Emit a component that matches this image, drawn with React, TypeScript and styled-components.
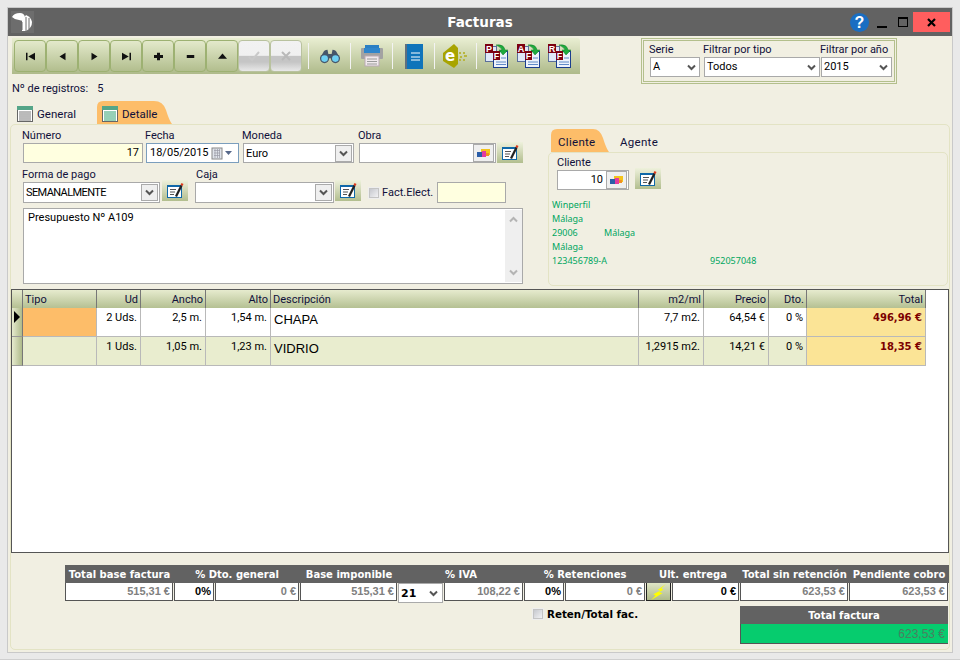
import React from 'react'
import styled, { createGlobalStyle } from 'styled-components'

const GlobalStyle = createGlobalStyle`
    html, body {
        margin: 0;
        padding: 0;
        background-color: #e9e9e9;
    }
    * {
        box-sizing: border-box;
    }
`

const UI = `Roboto, "Liberation Sans", sans-serif`
const ARIAL = `"Liberation Sans", Arial, sans-serif`
const WIDE = `"DejaVu Sans", Verdana, sans-serif`

const Page = styled.div`
    width: 960px;
    height: 660px;
    padding: 8px 8px 8px 8px;
    border-bottom: 1px solid #cfcfcf;
    font-family: ${UI};
    font-size: 11px;
    color: #10103a;
`

const Window = styled.div`
    height: 644px;
    background-color: #f1efe2;
    outline: 1px solid #c9c9c9;
    display: flex;
    flex-direction: column;
`

const TitleBar = styled.div`
    height: 28px;
    flex: none;
    background-color: #626262;
    display: grid;
    grid-template-columns: 1fr auto 1fr;
    align-items: center;
`

const Title = styled.div`
    font-family: ${WIDE};
    font-weight: 700;
    font-size: 13.5px;
    color: #fff;
`

const LogoBox = styled.div`
    width: 23px;
    height: 22px;
    margin-left: 3px;
    background-color: #6d6d6d;
`

const Controls = styled.div`
    display: flex;
    align-items: center;
    justify-content: flex-end;
    padding-right: 2px;
`

const Help = styled.div`
    width: 19px;
    height: 19px;
    margin-right: 8px;
    border-radius: 50%;
    background-color: #1a6ec2;
    color: #fff;
    font-family: ${ARIAL};
    font-weight: 700;
    font-size: 16px;
    line-height: 19px;
    text-align: center;
`

const MinButton = styled.div`
    width: 10px;
    height: 2px;
    margin: 9px 11px 0 0;
    background-color: #000;
`

const MaxButton = styled.div`
    width: 10px;
    height: 10px;
    margin-right: 5px;
    border: 1px solid #000;
    border-top-width: 2px;
`

const CloseButton = styled.div`
    width: 37px;
    height: 20px;
    background-color: #ff5e5e;
    display: flex;
    align-items: center;
    justify-content: center;
`

const TopBar = styled.div`
    height: 65px;
    flex: none;
    padding: 2px 0 0 4px;
    display: flex;
`

const LeftTop = styled.div`
    width: 568px;
`

const Toolbar = styled.div`
    height: 36px;
    padding-left: 2px;
    display: flex;
    align-items: center;
    border-radius: 0 3px 0 0;
    background: linear-gradient(#e9eed2, #aeba8a);
`

const NavButton = styled.div`
    width: 32px;
    height: 32px;
    border: 1px solid #9db172;
    border-radius: 4px;
    background: linear-gradient(#e3e9cb, #b2be8e);
    display: flex;
    align-items: center;
    justify-content: center;
`

const OffButton = styled.div`
    width: 32px;
    height: 32px;
    border-radius: 4px;
    border: 1px solid #b9c29f;
    background: linear-gradient(#f2f2f2 0, #f0f0f0 48%, #c5c5c5 50%, #c5c5c5 70%, #e8e8e8 100%);
    display: flex;
    align-items: center;
    justify-content: center;
`

const ToolSep = styled.div<{ $first?: boolean }>`
    width: 1px;
    height: 26px;
    background-color: #f3f3f3;
    margin-left: ${p => (p.$first ? '6px' : '0')};
`

const ToolIcon = styled.div<{ $w: number }>`
    width: ${p => p.$w}px;
    height: 32px;
    flex: none;
    display: flex;
    align-items: center;
    justify-content: center;
`

const Registers = styled.div`
    margin-top: 8px;
    display: flex;
    line-height: 14px;
    gap: 9px;
    color: #10103a;
`

const FilterBox = styled.div`
    width: 256px;
    height: 46px;
    margin-left: 61px;
    padding: 2px 4px 0 5px;
    border: 3px double #b3bf8c;
    display: flex;
`

const FilterField = styled.div<{ $w: number }>`
    width: ${p => p.$w}px;
    line-height: 14px;
    display: flex;
    flex-direction: column;
    flex: none;
    white-space: nowrap;
`

const SelectBox = styled.div<{ $w?: number; $h?: number; $ml?: number }>`
    width: ${p => (p.$w ? `${p.$w}px` : '100%')};
    height: ${p => p.$h ?? 21}px;
    margin-left: ${p => p.$ml ?? 0}px;
    padding-left: 2px;
    background-color: #fff;
    border: 1px solid #a9a9a9;
    display: flex;
    align-items: center;
    justify-content: space-between;
    font-size: 11px;
    color: #000;
`

const CapsValue = styled.span`
    letter-spacing: -0.6px;
`

const PlainArrow = styled.span`
    width: 14px;
    display: flex;
    justify-content: center;
    padding-right: 2px;
`

const BoxArrow = styled.span`
    width: 17px;
    height: 17px;
    margin-right: 1px;
    background-color: #efefef;
    border: 1px solid #aaa;
    display: flex;
    align-items: center;
    justify-content: center;
`

const TabStrip = styled.div`
    height: 23px;
    flex: none;
    padding-left: 6px;
    display: flex;
`

const TabButton = styled.div<{ $w: number; $active?: boolean }>`
    width: ${p => p.$w}px;
    height: 23px;
    margin-right: 2px;
    padding: 2px 0 0 ${p => (p.$active ? 5 : 3)}px;
    display: flex;
    align-items: center;
    gap: 4px;
    font-size: 11.5px;
    color: #10103a;
    background-color: ${p => (p.$active ? '#fdbd69' : 'transparent')};
    clip-path: path('M0 23 V6 Q0 0 6 0 H${p => p.$w - 18} Q${p => p.$w - 9} 0 ${p => p.$w - 6} 9 Q${p => p.$w - 3} 19 ${p => p.$w} 23 Z');
`

const MainPanel = styled.div`
    height: 526px;
    margin: 0 2px;
    border: 1px solid #e3e3c4;
    border-radius: 5px;
    display: flex;
    flex-direction: column;
`

const FormArea = styled.div`
    height: 164px;
    flex: none;
    display: flex;
`

const LeftForm = styled.div`
    width: 537px;
    flex: none;
    padding: 4px 0 0 11px;
    display: flex;
    flex-direction: column;
    gap: 5px;
`

const FormRow = styled.div`
    display: flex;
    align-items: flex-end;
`

const Field = styled.div<{ $gap?: number }>`
    margin-right: ${p => p.$gap ?? 0}px;
    display: flex;
    flex-direction: column;
`

const Label = styled.div<{ $ml?: number }>`
    height: 14px;
    margin-left: ${p => p.$ml ?? 0}px;
    line-height: 13px;
    white-space: nowrap;
`

const InputBox = styled.div<{ $w: number; $h?: number; $ml?: number; $yellow?: boolean; $focus?: boolean }>`
    width: ${p => p.$w}px;
    height: ${p => p.$h ?? 20}px;
    margin-left: ${p => p.$ml ?? 1}px;
    padding: 0 3px;
    background-color: ${p => (p.$yellow ? '#ffffe0' : '#fff')};
    border: 1px solid ${p => (p.$focus ? '#7b9ebd' : '#a9a9a9')};
    display: flex;
    align-items: center;
    justify-content: space-between;
    color: #000;
    line-height: 14px;
`

const RightValue = styled.span<{ $mr?: number }>`
    margin-left: auto;
    margin-right: ${p => p.$mr ?? 0}px;
`

const PickButton = styled.span`
    width: 21px;
    height: 18px;
    margin-right: -2px;
    background-color: #efefef;
    border: 1px solid #aaa;
    display: flex;
    align-items: center;
    justify-content: center;
`

const EditButton = styled.div<{ $left?: number; $bottom?: number }>`
    width: 26px;
    height: 21px;
    margin-left: ${p => p.$left ?? 0}px;
    margin-bottom: ${p => p.$bottom ?? 0}px;
    background: linear-gradient(#eef1dc, #b2be8e);
    display: flex;
    align-items: center;
    justify-content: center;
`

const CheckBox = styled.span`
    width: 10px;
    height: 10px;
    flex: none;
    border: 1px solid #c4c4c4;
    background: linear-gradient(135deg, #c6c8ce, #f2f2f4);
    outline: 1px solid #eee;
`

const CheckLabel = styled.div`
    width: 67px;
    margin-left: 8px;
    height: 21px;
    display: flex;
    align-items: center;
    gap: 3px;
    white-space: nowrap;
`

const Notes = styled.div`
    width: 500px;
    height: 76px;
    margin-left: 1px;
    padding: 2px 0 0 4px;
    background-color: #fff;
    border: 1px solid #a9a9a9;
    display: flex;
    justify-content: space-between;
    color: #000;
`

const ScrollTrack = styled.div`
    width: 17px;
    margin: -1px 0 1px;
    background-color: #efefef;
    display: flex;
    flex-direction: column;
    align-items: center;
    justify-content: space-between;
    padding: 6px 0;
`

const RightForm = styled.div`
    width: 401px;
    padding-top: 4px;
    display: flex;
    flex-direction: column;
`

const SubTabs = styled.div`
    height: 23px;
    flex: none;
    padding-left: 3px;
    display: flex;
`

const SubTab = styled.div<{ $w: number; $active?: boolean }>`
    width: ${p => p.$w}px;
    height: 23px;
    padding: 3px 0 0 ${p => (p.$active ? 7 : 11)}px;
    line-height: 20px;
    font-size: 11.5px;
    letter-spacing: 0.3px;
    color: #10103a;
    background-color: ${p => (p.$active ? '#fdbd69' : 'transparent')};
    clip-path: path('M0 23 V6 Q0 0 6 0 H${p => p.$w - 16} Q${p => p.$w - 9} 0 ${p => p.$w - 6} 9 Q${p => p.$w - 3} 19 ${p => p.$w} 23 Z');
`

const SubPanel = styled.div`
    width: 400px;
    height: 134px;
    padding: 3px 0 0 3px;
    border: 1px solid #e3e3c4;
    border-radius: 5px;
`

const ClientRow = styled.div`
    padding-left: 5px;
    display: flex;
    align-items: flex-end;
`

const ClientInfo = styled.div`
    margin-top: 8px;
    display: grid;
    grid-template-columns: 52px 106px 1fr;
    grid-auto-rows: 14px;
    font-family: "Noto Sans", ${ARIAL};
    font-size: 9px;
    line-height: 14px;
    color: #00a65f;
    white-space: nowrap;
`

const DataGrid = styled.div`
    height: 264px;
    flex: none;
    border: 1px solid #555;
    background-color: #fff;
`

const GridRow = styled.div<{ $h: number }>`
    height: ${p => p.$h}px;
    display: grid;
    grid-template-columns: 11px 74px 44px 65px 65px 368px 65px 65px 38px 119px;
`

const HeadCell = styled.div<{ $right?: boolean }>`
    padding: 0 2px;
    line-height: 19px;
    text-align: ${p => (p.$right ? 'right' : 'left')};
    background: linear-gradient(#e6ebce, #b2be8f);
    border-right: 1px solid #777;
    border-bottom: 1px solid #666;
    color: #10103a;
    white-space: nowrap;
`

const Cell = styled.div<{ $bg?: string; $right?: boolean }>`
    padding: 0 3px;
    line-height: 19px;
    text-align: ${p => (p.$right ? 'right' : 'left')};
    background-color: ${p => p.$bg ?? 'transparent'};
    border-right: 1px solid #b9b9b9;
    border-bottom: 1px solid #b9b9b9;
    color: #000;
    white-space: nowrap;
`

const DescCell = styled(Cell)`
    font-family: ${ARIAL};
    font-size: 13px;
    line-height: 23px;
`

const AmountCell = styled(Cell)`
    font-family: ${WIDE};
    font-weight: 700;
    font-size: 10px;
    color: #7c0000;
`

const RowMark = styled.div`
    background: linear-gradient(90deg, #e6ebce, #aeba8a);
    border-right: 1px solid #777;
    border-bottom: 1px solid #999;
    padding: 3px 0 0 2px;
`

const Totals = styled.div`
    margin-top: 12px;
    padding-left: 54px;
    display: flex;
`

const TotalGroup = styled.div<{ $w: number }>`
    width: ${p => p.$w}px;
    flex: none;
    display: flex;
    flex-direction: column;
`

const TotalHead = styled.div`
    height: 18px;
    background-color: #626262;
    color: #fff;
    font-family: ${WIDE};
    font-weight: 700;
    font-size: 10px;
    line-height: 19px;
    text-align: center;
    white-space: nowrap;
    overflow: hidden;
`

const TotalValues = styled.div`
    height: 18px;
    padding-right: 1px;
    display: flex;
    gap: 1px;
`

const TotalValue = styled.div<{ $w?: number; $dark?: boolean }>`
    flex: ${p => (p.$w ? `0 0 ${p.$w}px` : '1')};
    padding-right: 2px;
    background-color: #fff;
    border: 1px solid #555;
    border-top: 0;
    text-align: right;
    font-family: ${ARIAL};
    font-weight: 700;
    font-size: 11px;
    line-height: 17px;
    color: ${p => (p.$dark ? '#000' : '#808080')};
`

const IvaSelect = styled.div`
    flex: 0 0 45px;
    height: 20px;
    padding: 0 4px 0 2px;
    background-color: #fff;
    border: 1px solid #aaa;
    display: flex;
    align-items: center;
    justify-content: space-between;
    font-family: ${WIDE};
    font-weight: 700;
    font-size: 11px;
    color: #000;
`

const BoltButton = styled.div`
    flex: 0 0 25px;
    background: linear-gradient(#dfe5c6, #aeba8a);
    border: 1px solid #222;
    border-top: 0;
    display: flex;
    align-items: center;
    justify-content: center;
`

const BottomRow = styled.div`
    margin-top: 5px;
    padding-left: 522px;
    display: flex;
`

const RetenLabel = styled.div`
    width: 208px;
    height: 15px;
    display: flex;
    align-items: center;
    gap: 4px;
    font-family: ${WIDE};
    font-weight: 700;
    font-size: 10.3px;
    color: #000;
    white-space: nowrap;
`

const GrandTotal = styled.div`
    width: 208px;
    margin-left: -1px;
    display: flex;
    flex-direction: column;
`

const GrandValue = styled.div`
    height: 20px;
    padding-right: 3px;
    background-color: #06cc6e;
    border-bottom: 1px solid #555;
    border-left: 1px solid #555;
    text-align: right;
    font-family: ${ARIAL};
    font-size: 12px;
    line-height: 20px;
    color: #4a7f60;
`

const Logo = () => (
    <svg width="23" height="22" viewBox="0 0 23 22">
        <path d="M1 6 Q3 2 9 2 Q13 2 14 6 L14 12 Q11 9 8 9 Q4 9 1 6Z" fill="#fff" />
        <path d="M11 10 L15 4 Q20 6 21 11 Q21 17 15 20 L11 20Z" fill="#fff" />
        <path d="M11 11V19M15 6V20M18 7V18" stroke="#6d6d6d" strokeWidth="1" />
    </svg>
)

const CloseIcon = () => (
    <svg width="9" height="9" viewBox="0 0 9 9">
        <path d="M1 1 8 8M8 1 1 8" stroke="#000" strokeWidth="2.2" />
    </svg>
)

const Nav = ({ d }: { d: string }) => (
    <svg width="11" height="9" viewBox="0 0 14 12">
        <path d={d} fill="#111" />
    </svg>
)

const Binoculars = () => (
    <svg width="24" height="15" viewBox="0 0 26 18">
        <path d="M5 4 Q6 1 10 1 L11 6 H15 L16 1 Q20 1 21 4 L25 11 H1Z" fill="#46566a" />
        <circle cx="6.5" cy="11.5" r="5.5" fill="#46566a" />
        <circle cx="19.5" cy="11.5" r="5.5" fill="#46566a" />
        <circle cx="6.5" cy="11.5" r="4" fill="#6fd0f2" />
        <circle cx="19.5" cy="11.5" r="4" fill="#6fd0f2" />
    </svg>
)

const Printer = () => (
    <svg width="22" height="22" viewBox="0 0 22 22">
        <rect x="4" y="0" width="14" height="5" fill="#2a7fc4" />
        <rect x="0" y="3" width="22" height="11" rx="1" fill="#a2a2a2" />
        <rect x="3" y="3" width="16" height="5" fill="#2f86cc" />
        <rect x="4" y="11" width="14" height="10" fill="#f0e9ec" stroke="#b9a9b4" />
        <path d="M6 14H16M6 16.5H16M6 19H16" stroke="#9a9a9a" />
    </svg>
)

const Book = () => (
    <svg width="18" height="25" viewBox="0 0 18 25">
        <rect x="0" y="0" width="18" height="25" fill="#0f74ba" />
        <rect x="0" y="0" width="2" height="25" fill="#5f6f7e" />
        <path d="M6 9H15M6 13H15M6 16H15" stroke="#fff" strokeWidth="1" />
    </svg>
)

const EIcon = () => (
    <svg width="25" height="25" viewBox="0 0 25 25">
        <path d="M11 0 L0 9 V17 L11 24 L15 20 V4Z" fill="#a8a400" />
        <text x="7" y="17" fontFamily={WIDE} fontSize="15" fontWeight="700" fill="#fff" textAnchor="middle">
            e
        </text>
        <path d="M16 8h2v2h-2zM20 8h2v2h-2zM17 12h2v2h-2zM21 11h3v2h-3zM16 15h2v2h-2zM20 15h2v2h-2z" fill="#b8b640" />
    </svg>
)

const DocCopy = ({ letter }: { letter: string }) => (
    <svg width="24" height="24" viewBox="0 0 24 24">
        <rect x="0.5" y="2.5" width="11" height="15" fill="#dfe8f8" stroke="#5b6f9a" />
        <rect x="0" y="0" width="8" height="9" fill="#7c0010" />
        <text x="4" y="8" fontFamily={ARIAL} fontSize="9" fontWeight="700" fill="#fff" textAnchor="middle">
            {letter}
        </text>
        <rect x="8.5" y="7.5" width="14" height="16" fill="#eef3fb" stroke="#1c3f8f" />
        <rect x="8" y="7" width="7" height="9" fill="#7c0010" />
        <text x="11.5" y="15" fontFamily={ARIAL} fontSize="9" fontWeight="700" fill="#fff" textAnchor="middle">
            F
        </text>
        <path d="M16 14H21M11 18H21M11 20.5H21" stroke="#5f8ac8" />
        <path d="M11 1 Q19 0 20 6 L23 6 L18 11 L14 6 L17 6 Q16 3 11 1Z" fill="#1eaa3c" stroke="#0d7a28" strokeWidth="0.5" />
    </svg>
)

const GridIcon = ({ active }: { active?: boolean }) => (
    <svg width="16" height="16" viewBox="0 0 16 16">
        <rect x="0.5" y="0.5" width="15" height="15" fill="#fff" stroke="#666" />
        <rect x="0" y="0" width="16" height="4" fill="#55a588" />
        <path d="M2 6H14M2 8H14M2 10H14M2 12H14M2 14H14" stroke={active ? '#2aa06e' : '#777'} />
    </svg>
)

const Chevron = () => (
    <svg width="9" height="7" viewBox="0 0 9 7">
        <path d="M1 1.5 4.5 5 8 1.5" fill="none" stroke="#555" strokeWidth="2" />
    </svg>
)

const ScrollArrow = ({ up }: { up?: boolean }) => (
    <svg width="9" height="7" viewBox="0 0 9 7">
        <path d={up ? 'M1 5.5 4.5 2 8 5.5' : 'M1 1.5 4.5 5 8 1.5'} fill="none" stroke="#b4b4b4" strokeWidth="2" />
    </svg>
)

const CalendarIcon = () => (
    <svg width="24" height="13" viewBox="0 0 24 13">
        <rect x="1" y="1" width="10" height="11" fill="#dfe3ea" stroke="#888" />
        <path d="M3 3.5H9M3 6H9M3 8.5H9M4 2V11M6.5 2V11M8.5 2V11" stroke="#9a9aa5" strokeWidth="0.7" />
        <path d="M14 4H21L17.5 8Z" fill="#56688a" />
    </svg>
)

const FolderIcon = () => (
    <svg width="13" height="10" viewBox="0 0 13 10">
        <rect x="4" y="1" width="9" height="6" fill="#f3c31c" />
        <rect x="0" y="4" width="7" height="5" fill="#2a5da8" />
        <rect x="5" y="3" width="4" height="6" fill="#e23aa0" />
        <rect x="9" y="5" width="3" height="3" fill="#f09020" />
    </svg>
)

const EditIcon = () => (
    <svg width="17" height="15" viewBox="0 0 17 15">
        <rect x="0.5" y="2.5" width="14" height="12" fill="#fff" stroke="#0f68a8" />
        <rect x="0" y="2" width="15" height="2" fill="#0f68a8" />
        <path d="M3 6.5H9M3 9H8M3 11.5H7" stroke="#555" />
        <path d="M8 13 13.5 2 15.5 3 10 14Z" fill="#222" />
        <path d="M13.5 2 14.5 0 16.5 1 15.5 3Z" fill="#e03a1a" />
    </svg>
)

const Bolt = () => (
    <svg width="16" height="16" viewBox="0 0 14 14">
        <path d="M13 0 6 5 8 6 2 9 4 10 0 14 10 8 7 7 11 5 9 4Z" fill="#ffff00" />
    </svg>
)

const columns = ['Ud', 'Ancho', 'Alto']

const rows = [
    { ud: '2 Uds.', ancho: '2,5 m.', alto: '1,54 m.', desc: 'CHAPA', m2: '7,7 m2.', precio: '64,54 €', dto: '0 %', total: '496,96 €', bg: '#ffffff', tipo: '#fdbd69', mark: true },
    { ud: '1 Uds.', ancho: '1,05 m.', alto: '1,23 m.', desc: 'VIDRIO', m2: '1,2915 m2.', precio: '14,21 €', dto: '0 %', total: '18,35 €', bg: '#e9edcf', tipo: '#e9edcf', mark: false },
]

const App = () => {
    return (
        <Page>
            <GlobalStyle />
            <Window>
                <TitleBar>
                    <LogoBox>
                        <Logo />
                    </LogoBox>
                    <Title>Facturas</Title>
                    <Controls>
                        <Help>?</Help>
                        <MinButton />
                        <MaxButton />
                        <CloseButton>
                            <CloseIcon />
                        </CloseButton>
                    </Controls>
                </TitleBar>
                <TopBar>
                    <LeftTop>
                        <Toolbar>
                            <NavButton><Nav d="M1 1h2v10H1zM13 1v10L4 6z" /></NavButton>
                            <NavButton><Nav d="M11 1v10L3 6z" /></NavButton>
                            <NavButton><Nav d="M3 1v10l8-5z" /></NavButton>
                            <NavButton><Nav d="M1 1v10l9-5zM11 1h2v10h-2z" /></NavButton>
                            <NavButton><Nav d="M5 1h4v3h4v4H9v3H5V8H1V4h4z" /></NavButton>
                            <NavButton><Nav d="M2 4h10v4H2z" /></NavButton>
                            <NavButton><Nav d="M7 2l6 7H1z" /></NavButton>
                            <OffButton>
                                <svg width="14" height="12" viewBox="0 0 14 12"><path d="M2 7l3 3 7-8" stroke="#c9c9c9" strokeWidth="2" fill="none" /></svg>
                            </OffButton>
                            <OffButton>
                                <svg width="12" height="12" viewBox="0 0 12 12"><path d="M2 2l8 8M10 2l-8 8" stroke="#b9b9b9" strokeWidth="2" fill="none" /></svg>
                            </OffButton>
                            <ToolSep $first />
                            <ToolIcon $w={41}><Binoculars /></ToolIcon>
                            <ToolSep />
                            <ToolIcon $w={41}><Printer /></ToolIcon>
                            <ToolSep />
                            <ToolIcon $w={41}><Book /></ToolIcon>
                            <ToolSep />
                            <ToolIcon $w={41}><EIcon /></ToolIcon>
                            <ToolSep />
                            <ToolIcon $w={40}><DocCopy letter="P" /></ToolIcon>
                            <ToolIcon $w={24}><DocCopy letter="A" /></ToolIcon>
                            <ToolIcon $w={38}><DocCopy letter="R" /></ToolIcon>
                        </Toolbar>
                        <Registers>
                            <span>Nº de registros:</span>
                            <span>5</span>
                        </Registers>
                    </LeftTop>
                    <FilterBox>
                        <FilterField $w={54}>
                            <span>Serie</span>
                            <SelectBox $w={50} $h={20} $ml={1}>A<PlainArrow><Chevron /></PlainArrow></SelectBox>
                        </FilterField>
                        <FilterField $w={117}>
                            <span>Filtrar por tipo</span>
                            <SelectBox $w={116} $h={20} $ml={1}>Todos<PlainArrow><Chevron /></PlainArrow></SelectBox>
                        </FilterField>
                        <FilterField $w={72}>
                            <span>Filtrar por año</span>
                            <SelectBox $w={71} $h={20} $ml={1}>2015<PlainArrow><Chevron /></PlainArrow></SelectBox>
                        </FilterField>
                    </FilterBox>
                </TopBar>
                <TabStrip>
                    <TabButton $w={81}><GridIcon />General</TabButton>
                    <TabButton $w={75} $active><GridIcon active />Detalle</TabButton>
                </TabStrip>
                <MainPanel>
                    <FormArea>
                        <LeftForm>
                            <FormRow>
                                <Field $gap={2}>
                                    <Label>Número</Label>
                                    <InputBox $w={120} $yellow><RightValue>17</RightValue></InputBox>
                                </Field>
                                <Field $gap={3}>
                                    <Label>Fecha</Label>
                                    <InputBox $w={93} $focus>18/05/2015<CalendarIcon /></InputBox>
                                </Field>
                                <Field $gap={4}>
                                    <Label>Moneda</Label>
                                    <SelectBox $w={111} $h={20} $ml={1}>Euro<BoxArrow><Chevron /></BoxArrow></SelectBox>
                                </Field>
                                <Field>
                                    <Label>Obra</Label>
                                    <InputBox $w={137}><RightValue /><PickButton><FolderIcon /></PickButton></InputBox>
                                </Field>
                                <EditButton $left={1}><EditIcon /></EditButton>
                            </FormRow>
                            <FormRow>
                                <Field>
                                    <Label>Forma de pago</Label>
                                    <SelectBox $w={137} $ml={1}><CapsValue>SEMANALMENTE</CapsValue><BoxArrow><Chevron /></BoxArrow></SelectBox>
                                </Field>
                                <EditButton $left={2} $bottom={2}><EditIcon /></EditButton>
                                <Field>
                                    <Label $ml={8}>Caja</Label>
                                    <SelectBox $w={139} $ml={7}><span />
                                        <BoxArrow><Chevron /></BoxArrow>
                                    </SelectBox>
                                </Field>
                                <EditButton $left={1} $bottom={2}><EditIcon /></EditButton>
                                <CheckLabel><CheckBox />Fact.Elect.</CheckLabel>
                                <InputBox $w={69} $h={21} $yellow />
                            </FormRow>
                            <Notes>
                                Presupuesto Nº A109
                                <ScrollTrack>
                                    <ScrollArrow up />
                                    <ScrollArrow />
                                </ScrollTrack>
                            </Notes>
                        </LeftForm>
                        <RightForm>
                            <SubTabs>
                                <SubTab $w={58} $active>Cliente</SubTab>
                                <SubTab $w={70}>Agente</SubTab>
                            </SubTabs>
                            <SubPanel>
                                <ClientRow>
                                    <Field>
                                        <Label>Cliente</Label>
                                        <InputBox $w={72} $ml={0}>
                                            <RightValue $mr={3}>10</RightValue>
                                            <PickButton><FolderIcon /></PickButton>
                                        </InputBox>
                                    </Field>
                                    <EditButton $left={6} $bottom={1}><EditIcon /></EditButton>
                                </ClientRow>
                                <ClientInfo>
                                    <span>Winperfil</span><span /><span />
                                    <span>Málaga</span><span /><span />
                                    <span>29006</span><span>Málaga</span><span />
                                    <span>Málaga</span><span /><span />
                                    <span>123456789-A</span><span /><span>952057048</span>
                                </ClientInfo>
                            </SubPanel>
                        </RightForm>
                    </FormArea>
                    <DataGrid>
                        <GridRow $h={18}>
                            <HeadCell />
                            <HeadCell>Tipo</HeadCell>
                            {columns.map(c => <HeadCell key={c} $right>{c}</HeadCell>)}
                            <HeadCell>Descripción</HeadCell>
                            <HeadCell $right>m2/ml</HeadCell>
                            <HeadCell $right>Precio</HeadCell>
                            <HeadCell $right>Dto.</HeadCell>
                            <HeadCell $right>Total</HeadCell>
                        </GridRow>
                        {rows.map(r => (
                            <GridRow key={r.desc} $h={29}>
                                <RowMark>
                                    {r.mark && (
                                        <svg width="6" height="12" viewBox="0 0 6 12"><path d="M0 0 6 6 0 12Z" fill="#000" /></svg>
                                    )}
                                </RowMark>
                                <Cell $bg={r.tipo} />
                                <Cell $bg={r.bg} $right>{r.ud}</Cell>
                                <Cell $bg={r.bg} $right>{r.ancho}</Cell>
                                <Cell $bg={r.bg} $right>{r.alto}</Cell>
                                <DescCell $bg={r.bg}>{r.desc}</DescCell>
                                <Cell $bg={r.bg} $right>{r.m2}</Cell>
                                <Cell $bg={r.bg} $right>{r.precio}</Cell>
                                <Cell $bg={r.bg} $right>{r.dto}</Cell>
                                <AmountCell $bg="#fbe496" $right>{r.total}</AmountCell>
                            </GridRow>
                        ))}
                    </DataGrid>
                    <Totals>
                        <TotalGroup $w={109}>
                            <TotalHead>Total base factura</TotalHead>
                            <TotalValues><TotalValue>515,31 €</TotalValue></TotalValues>
                        </TotalGroup>
                        <TotalGroup $w={126}>
                            <TotalHead>% Dto. general</TotalHead>
                            <TotalValues>
                                <TotalValue $w={40} $dark>0%</TotalValue>
                                <TotalValue>0 €</TotalValue>
                            </TotalValues>
                        </TotalGroup>
                        <TotalGroup $w={98}>
                            <TotalHead>Base imponible</TotalHead>
                            <TotalValues><TotalValue>515,31 €</TotalValue></TotalValues>
                        </TotalGroup>
                        <TotalGroup $w={126}>
                            <TotalHead>% IVA</TotalHead>
                            <TotalValues>
                                <IvaSelect>21<Chevron /></IvaSelect>
                                <TotalValue>108,22 €</TotalValue>
                            </TotalValues>
                        </TotalGroup>
                        <TotalGroup $w={122}>
                            <TotalHead>% Retenciones</TotalHead>
                            <TotalValues>
                                <TotalValue $w={40} $dark>0%</TotalValue>
                                <TotalValue>0 €</TotalValue>
                            </TotalValues>
                        </TotalGroup>
                        <TotalGroup $w={94}>
                            <TotalHead>Ult. entrega</TotalHead>
                            <TotalValues>
                                <BoltButton><Bolt /></BoltButton>
                                <TotalValue $dark>0 €</TotalValue>
                            </TotalValues>
                        </TotalGroup>
                        <TotalGroup $w={109}>
                            <TotalHead>Total sin retención</TotalHead>
                            <TotalValues><TotalValue>623,53 €</TotalValue></TotalValues>
                        </TotalGroup>
                        <TotalGroup $w={100}>
                            <TotalHead>Pendiente cobro</TotalHead>
                            <TotalValues><TotalValue>623,53 €</TotalValue></TotalValues>
                        </TotalGroup>
                    </Totals>
                    <BottomRow>
                        <RetenLabel><CheckBox />Reten/Total fac.</RetenLabel>
                        <GrandTotal>
                            <TotalHead>Total factura</TotalHead>
                            <GrandValue>623,53 €</GrandValue>
                        </GrandTotal>
                    </BottomRow>
                </MainPanel>
            </Window>
        </Page>
    )
}

export default App
